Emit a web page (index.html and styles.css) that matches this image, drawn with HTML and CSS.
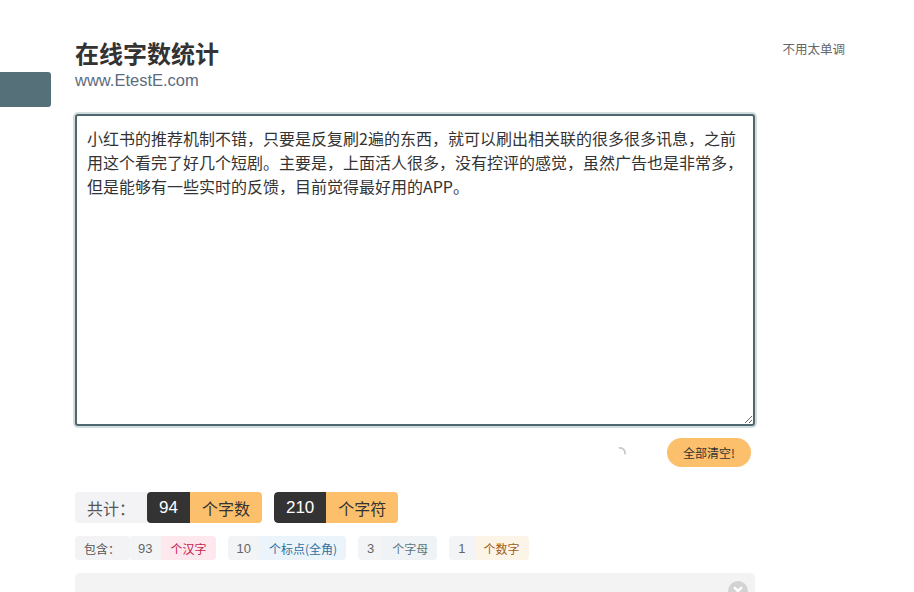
FILE: index.html
```html
<!DOCTYPE html>
<html lang="zh-CN">
<head>
<meta charset="utf-8">
<title>在线字数统计</title>
<link rel="stylesheet" href="styles.css">
</head>
<body>
<div class="side-tab"></div>
<div class="page">
  <header class="header">
    <div class="brand">
      <h1 class="title">在线字数统计</h1>
      <div class="site">www.EtestE.com</div>
    </div>
    <a class="top-link">不用太单调</a>
  </header>
  <main class="main">
    <textarea class="editor">小红书的推荐机制不错，只要是反复刷2遍的东西，就可以刷出相关联的很多很多讯息，之前用这个看完了好几个短剧。主要是，上面活人很多，没有控评的感觉，虽然广告也是非常多，但是能够有一些实时的反馈，目前觉得最好用的APP。</textarea>
    <div class="actions">
      <svg class="spinner" width="14" height="14" viewBox="0 0 14 14"><path d="M5.5 2 A5 5 0 0 1 11 7.5" fill="none" stroke="#c8c8c8" stroke-width="1.8" stroke-linecap="round"/></svg>
      <button class="clear-btn">全部清空!</button>
    </div>
    <div class="totals">
      <span class="pair"><span class="tot-label">共计：</span><span class="num">94</span><span class="unit">个字数</span></span>
      <span class="pair"><span class="num">210</span><span class="unit">个字符</span></span>
    </div>
    <div class="details">
      <span class="pair-s"><span class="lab">包含：</span><span class="n">93</span><span class="u u-han">个汉字</span></span>
      <span class="pair-s"><span class="n">10</span><span class="u u-punc">个标点(全角)</span></span>
      <span class="pair-s"><span class="n">3</span><span class="u u-let">个字母</span></span>
      <span class="pair-s"><span class="n">1</span><span class="u u-dig">个数字</span></span>
    </div>
    <div class="panel">
      <span class="close"><svg width="20" height="20" viewBox="0 0 20 20"><circle cx="10" cy="10" r="10" fill="#d3d3d3"/><path d="M6.8 6.8 L13.2 13.2 M13.2 6.8 L6.8 13.2" stroke="#fff" stroke-width="2.4" stroke-linecap="round"/></svg></span>
    </div>
  </main>
</div>
</body>
</html>
```
FILE: styles.css
```css
* { box-sizing: border-box; }
html, body { margin: 0; padding: 0; background: #fff; }
html { height: 592px; overflow: hidden; }
body {
  font-family: "Liberation Sans", "Noto Sans CJK SC", sans-serif;
  color: #333;
  position: relative;
  height: 592px;
  overflow: hidden;
}
.side-tab {
  position: absolute;
  left: 0;
  top: 72px;
  width: 51px;
  height: 35px;
  background: #56707a;
  border-radius: 0 3px 3px 0;
}
.page {
  margin-left: 75px;
  width: 770px;
  padding-top: 38px;
}
.header {
  display: flex;
  justify-content: space-between;
  align-items: flex-start;
}
.title {
  margin: 0;
  font-family: "Noto Sans CJK SC", sans-serif;
  font-size: 24px;
  line-height: 30px;
  font-weight: 700;
  color: #333;
}
.site {
  margin-top: 2px;
  font-family: "Liberation Sans", sans-serif;
  font-size: 16.5px;
  line-height: 20px;
  color: #5d6b7d;
}
.top-link {
  font-family: "Noto Sans CJK SC", sans-serif;
  font-size: 12.5px;
  line-height: 20px;
  color: #666;
  margin-top: 1px;
}
.main { width: 680px; margin-top: 24px; }
.editor {
  display: block;
  width: 680px;
  height: 312px;
  padding: 10px;
  border: 2px solid #4f686e;
  border-radius: 3px;
  box-shadow: 0 0 0 2px #d3dddf;
  font-family: "Noto Sans CJK SC", sans-serif;
  font-size: 16px;
  line-height: 24px;
  color: #333;
  background: #fff;
  resize: vertical;
  outline: none;
}
.actions {
  display: flex;
  justify-content: flex-end;
  align-items: center;
  gap: 39px;
  margin-top: 12px;
  padding-right: 4px;
}
.spinner { display: block; }
.clear-btn {
  width: 84px;
  height: 29px;
  border: none;
  border-radius: 15px;
  background: #fcbf6b;
  font-family: "Noto Sans CJK SC", sans-serif;
  font-size: 12px;
  color: #333;
  padding: 0;
}
.totals {
  display: flex;
  gap: 12px;
  margin-top: 25px;
}
.pair { display: flex; border-radius: 4px; overflow: hidden; }
.tot-label, .num, .unit {
  display: inline-flex;
  align-items: center;
  height: 31px;
  padding: 0 12px;
  font-family: "Noto Sans CJK SC", sans-serif;
  font-size: 16px;
}
.tot-label { background: #f3f3f5; color: #555; }
.num { background: #333; color: #fff; font-family: "Liberation Sans", sans-serif; font-size: 17px; border-radius: 4px 0 0 4px; }
.unit { background: #fcbf6b; color: #333; }
.details {
  display: flex;
  gap: 12px;
  margin-top: 13px;
}
.pair-s { display: flex; border-radius: 4px; overflow: hidden; }
.lab, .n, .u {
  display: inline-flex;
  align-items: center;
  height: 24px;
  padding: 0 9px;
  font-family: "Noto Sans CJK SC", sans-serif;
  font-size: 12px;
}
.lab { background: #f3f3f5; color: #555; }
.n { background: #f3f4f6; color: #666; font-family: "Liberation Sans", sans-serif; font-size: 13px; }
.lab + .n { border-radius: 4px 0 0 4px; }
.u-han { background: #fde8ee; color: #c7254e; }
.u-punc { background: #ebf4fb; color: #2f6f9f; }
.u-let { background: #eff3f5; color: #5a7580; }
.u-dig { background: #fdf4e8; color: #9a6022; }
.panel {
  position: relative;
  margin-top: 13px;
  height: 60px;
  background: #f3f3f3;
  border-radius: 5px;
}
.close {
  position: absolute;
  right: 7px;
  top: 8px;
  width: 20px;
  height: 20px;
}
.close svg { display: block; }
```
